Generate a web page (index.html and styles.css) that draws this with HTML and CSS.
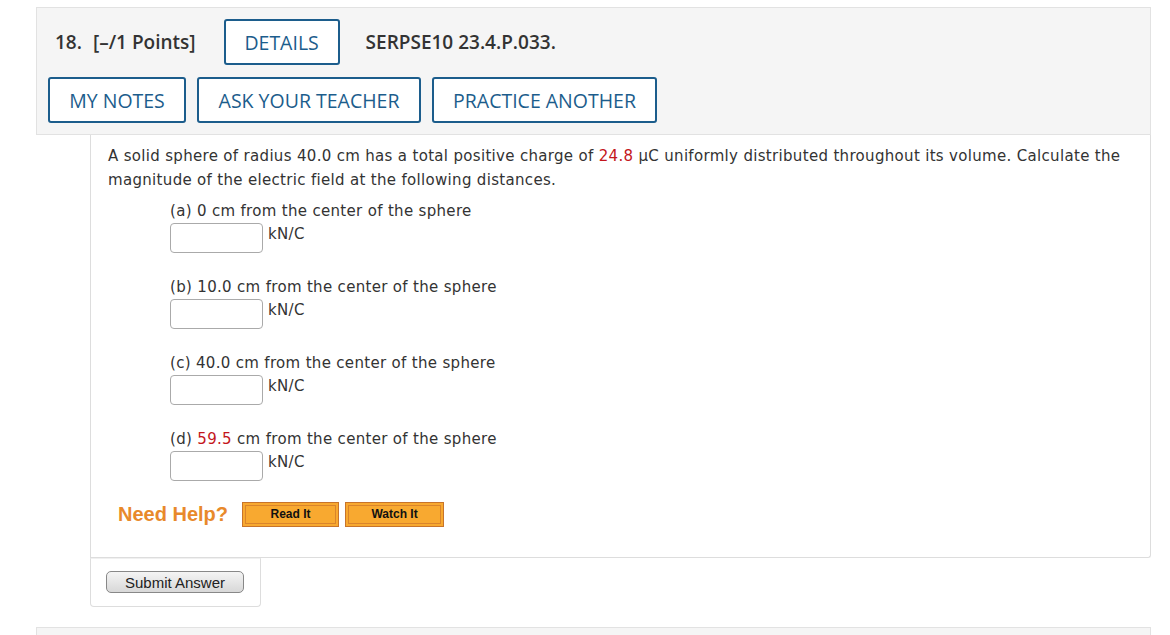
FILE: index.html
```html
<!DOCTYPE html>
<html>
<head>
<meta charset="utf-8">
<link rel="stylesheet" href="styles.css">
</head>
<body>
<div class="page">
  <div class="qhead">
    <div class="title-row">
      <span class="qnum">18.</span>
      <span class="points">[–/1 Points]</span>
      <span class="btn btn-details">DETAILS</span>
      <span class="code">SERPSE10 23.4.P.033.</span>
    </div>
    <div class="btn-row">
      <span class="btn btn-notes">MY NOTES</span>
      <span class="btn btn-ask">ASK YOUR TEACHER</span>
      <span class="btn btn-practice">PRACTICE ANOTHER</span>
    </div>
  </div>
  <div class="qbody">
    <p class="intro">A solid sphere of radius 40.0 cm has a total positive charge of <span class="red">24.8</span> μC uniformly distributed throughout its volume. Calculate the magnitude of the electric field at the following distances.</p>
    <div class="part">
      <div class="plabel">(a) 0 cm from the center of the sphere</div>
      <div class="answer"><span class="field"></span><span class="unit">kN/C</span></div>
    </div>
    <div class="part">
      <div class="plabel">(b) 10.0 cm from the center of the sphere</div>
      <div class="answer"><span class="field"></span><span class="unit">kN/C</span></div>
    </div>
    <div class="part">
      <div class="plabel">(c) 40.0 cm from the center of the sphere</div>
      <div class="answer"><span class="field"></span><span class="unit">kN/C</span></div>
    </div>
    <div class="part">
      <div class="plabel">(d) <span class="red">59.5</span> cm from the center of the sphere</div>
      <div class="answer"><span class="field"></span><span class="unit">kN/C</span></div>
    </div>
    <div class="help">
      <span class="need">Need Help?</span>
      <span class="obtn obtn-read">Read It</span>
      <span class="obtn obtn-watch">Watch It</span>
    </div>
  </div>
  <div class="submit-area">
    <span class="submit">Submit Answer</span>
  </div>
  <div class="next-box"></div>
</div>
</body>
</html>
```

FILE: styles.css
```css
* { box-sizing: border-box; }
html, body { margin: 0; padding: 0; background: #fff; }
body { font-family: "DejaVu Sans", Verdana, sans-serif; color: #333; }

.page {
  padding: 7px 19px 0 36px;
  width: 1170px;
  height: 635px;
  overflow: hidden;
}

.qhead {
  background: #f5f5f5;
  border: 1px solid #e2e2e2;
  padding: 11px;
  font-family: "Open Sans", "Noto Sans", sans-serif;
  height: 128px;
}

.title-row {
  display: flex;
  align-items: center;
  height: 46px;
  padding-left: 7px;
  color: #333;
  font-weight: 600;
  font-size: 19px;
}
.qnum { margin-right: 11px; }
.points { margin-right: 28px; }
.code { margin-left: 26px; }

.btn {
  display: inline-flex;
  align-items: center;
  justify-content: center;
  border: 2px solid #1c5d8c;
  border-radius: 3px;
  color: #1c5d8c;
  background: #fff;
  font-family: "Open Sans", "Noto Sans", sans-serif;
  font-weight: 400;
  font-size: 19.5px;
  height: 46px;
}
.btn-details { width: 116px; }

.btn-row {
  display: flex;
  gap: 11px;
  margin-top: 12px;
}
.btn-notes { width: 138px; }
.btn-ask { width: 224px; }
.btn-practice { width: 225px; }

.qbody {
  margin-left: 54px;
  border-left: 1px solid #ddd;
  border-right: 1px solid #ddd;
  border-bottom: 1px solid #ddd;
  border-bottom-right-radius: 3px;
  padding: 9px 0 0 17px;
  height: 423px;
  font-size: 15px;
  letter-spacing: 0.32px;
}

.intro {
  margin: 0;
  line-height: 24px;
  padding-right: 10px;
}
.red { color: #c4161c; }

.part {
  margin-left: 62px;
  margin-top: 7px;
  height: 70px;
}
.part + .part { margin-top: 6px; }
.plabel { line-height: 24px; }
.answer {
  display: flex;
  align-items: center;
  height: 30px;
}
.field {
  display: inline-block;
  width: 93px;
  height: 30px;
  border: 1px solid #aaa;
  border-radius: 4px;
  background: #fff;
  margin-right: 5px;
}
.unit { position: relative; top: -4px; }

.help {
  display: flex;
  align-items: center;
  margin-left: 10px;
  margin-top: 4px;
  height: 26px;
  letter-spacing: 0;
}
.need {
  font-family: "Liberation Sans", Arial, sans-serif;
  font-weight: bold;
  font-size: 20px;
  color: #e8892b;
  margin-right: 14px;
}
.obtn {
  display: inline-flex;
  align-items: center;
  justify-content: center;
  height: 25px;
  background: #f8a930;
  border: 1px solid #c8742a;
  box-shadow: inset 0 0 0 2px #f8a930, inset 0 0 0 3px #d9842c;
  font-family: "Liberation Sans", Arial, sans-serif;
  font-weight: bold;
  font-size: 12px;
  color: #111;
}
.obtn-read { width: 97px; margin-right: 6px; }
.obtn-watch { width: 99px; }

.submit-area {
  margin-left: 54px;
  width: 171px;
  height: 49px;
  border: 1px solid #ddd;
  border-top: 1px solid #f0f0f0;
  border-radius: 0 0 4px 4px;
  padding: 12px 0 0 15px;
}
.submit {
  display: inline-flex;
  align-items: center;
  justify-content: center;
  width: 138px;
  height: 22px;
  border: 1px solid #888;
  border-radius: 5px;
  background: linear-gradient(#f4f4f4, #d8d8d8);
  font-family: "Liberation Sans", Arial, sans-serif;
  font-size: 15px;
  color: #222;
}

.next-box {
  margin-top: 20px;
  height: 20px;
  background: #f5f5f5;
  border: 1px solid #e2e2e2;
}
```
